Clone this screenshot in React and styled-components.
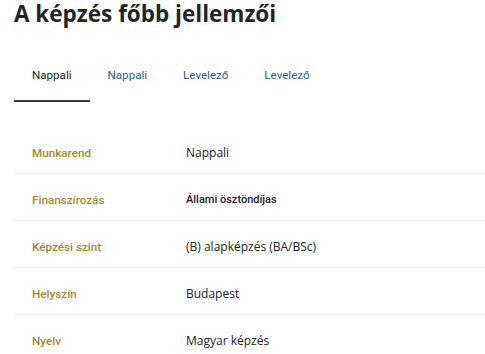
import React from 'react';
import styled, { createGlobalStyle } from 'styled-components';

const GlobalStyle = createGlobalStyle`
  body {
    margin: 0;
    background: #ffffff;
    font-family: "Open Sans", "Liberation Sans", sans-serif;
  }
`;

const Page = styled.div`
  padding: 0 0 0 14px;
`;

const Title = styled.h2`
  margin: 0;
  padding-top: 2px;
  font-family: "Open Sans", sans-serif;
  font-weight: 700;
  font-size: 22.5px;
  line-height: 24px;
  color: #212529;
`;

const TabList = styled.div`
  display: flex;
  margin-top: 24px;
`;

const Tab = styled.div`
  padding: 18px 18px;
  font-family: Roboto, "Liberation Sans", sans-serif;
  font-size: 11.6px;
  line-height: 14px;
  color: ${(p) => (p.$active ? '#222222' : '#2d5ba6')};
  border-bottom: 2px solid ${(p) => (p.$active ? '#343a40' : 'transparent')};
`;

const Table = styled.div`
  margin-top: 25px;
`;

const Row = styled.div`
  display: grid;
  grid-template-columns: 154px 1fr;
  padding: 16px 0 10px 18px;
  border-bottom: 1px solid #f0f0f0;
  line-height: 20px;
`;

const Label = styled.div`
  font-family: Roboto, "Liberation Sans", sans-serif;
  font-weight: 500;
  font-size: 11.7px;
  color: #a18b25;
`;

const Value = styled.div`
  color: #222222;
  font-family: ${(p) => (p.$compact ? 'Roboto, sans-serif' : '"Open Sans", sans-serif')};
  font-size: ${(p) => (p.$compact ? '11px' : '12px')};
  font-weight: ${(p) => (p.$compact ? 500 : 400)};
`;

const tabs = [
  { label: 'Nappali', active: true },
  { label: 'Nappali' },
  { label: 'Levelező' },
  { label: 'Levelező' },
];

const rows = [
  { label: 'Munkarend', value: 'Nappali' },
  { label: 'Finanszírozás', value: 'Állami ösztöndíjas', compact: true },
  { label: 'Képzési szint', value: '(B) alapképzés (BA/BSc)' },
  { label: 'Helyszín', value: 'Budapest' },
  { label: 'Nyelv', value: 'Magyar képzés' },
];

const App = () => (
  <>
    <GlobalStyle />
    <Page>
      <Title>A képzés főbb jellemzői</Title>
      <TabList>
        {tabs.map((t, i) => (
          <Tab key={i} $active={t.active}>{t.label}</Tab>
        ))}
      </TabList>
      <Table>
        {rows.map((r) => (
          <Row key={r.label}>
            <Label>{r.label}</Label>
            <Value $compact={r.compact}>{r.value}</Value>
          </Row>
        ))}
      </Table>
    </Page>
  </>
);

export default App;
